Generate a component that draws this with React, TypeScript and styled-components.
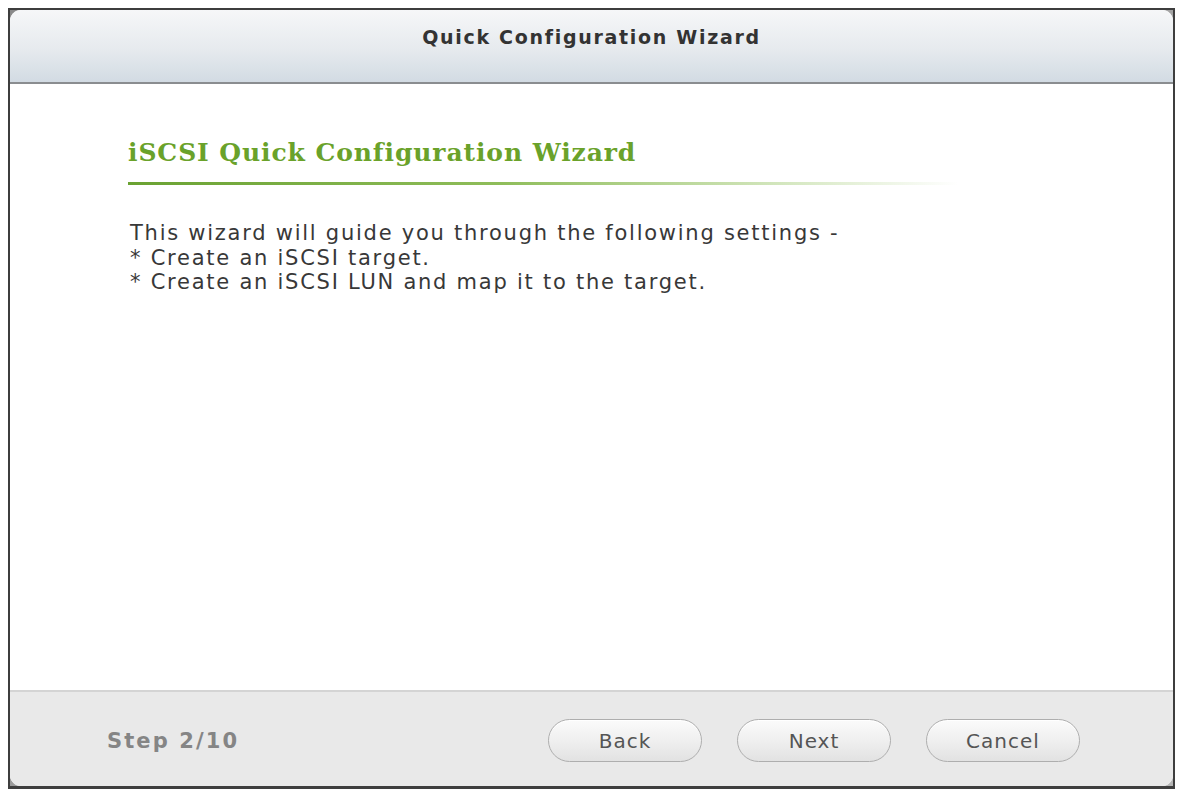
import React from "react";
import styled, { createGlobalStyle } from "styled-components";

const Global = createGlobalStyle`
  html, body { margin: 0; padding: 0; background: #ffffff; }
  body { font-family: "DejaVu Sans", Verdana, sans-serif; }
`;

const Frame = styled.div`
  box-sizing: border-box;
  margin: 8px 0 0 8px;
  width: 1167px;
  height: 781px;
  border: 2px solid #3e3e3e;
  border-bottom-width: 3px;
  background: linear-gradient(135deg, #8a8a8a, #b5b5b5);
  display: flex;
`;

const Dialog = styled.div`
  flex: 1;
  display: flex;
  flex-direction: column;
  border-radius: 11px;
  overflow: hidden;
  background: #ffffff;
`;

const TitleBar = styled.div`
  height: 74px;
  flex: none;
  display: flex;
  align-items: center;
  justify-content: center;
  background: linear-gradient(180deg, #f6f7f8 0%, #e6eaee 55%, #d2dbe3 100%);
  border-bottom: 2px solid #8a8d90;
  padding-bottom: 18px;
  box-sizing: border-box;
  font-family: "DejaVu Sans", Verdana, sans-serif;
  font-weight: bold;
  font-size: 19px;
  letter-spacing: 1.7px;
  color: #333333;
`;

const Body = styled.div`
  flex: 1;
  padding: 53px 0 0 118px;
`;

const Heading = styled.h1`
  margin: 0;
  font-family: "DejaVu Serif", Georgia, serif;
  font-weight: bold;
  font-size: 25px;
  line-height: 31px;
  letter-spacing: 0.9px;
  color: #6aa22a;
`;

const Rule = styled.div`
  margin-top: 14px;
  width: 830px;
  height: 3px;
  background: linear-gradient(90deg, #6aa232 0%, #8fbd5a 45%, #d6e8c2 80%, rgba(255,255,255,0) 100%);
`;

const Intro = styled.div`
  margin: 36px 0 0 2px;
  font-family: "DejaVu Sans", Verdana, sans-serif;
  font-size: 21px;
  line-height: 24.5px;
  letter-spacing: 1.75px;
  color: #383838;
`;

const Footer = styled.div`
  height: 96px;
  flex: none;
  box-sizing: border-box;
  border-top: 2px solid #d4d4d4;
  background: #e9e9e9;
  display: flex;
  align-items: center;
  padding: 3px 93px 0 97px;
`;

const Step = styled.div`
  font-family: "DejaVu Sans", Verdana, sans-serif;
  font-weight: bold;
  font-size: 21px;
  letter-spacing: 2.1px;
  color: #858585;
`;

const Buttons = styled.div`
  margin-left: auto;
  display: flex;
  gap: 35px;
`;

const Button = styled.button`
  width: 154px;
  height: 43px;
  border-radius: 22px;
  border: 1px solid #aeaeae;
  background: linear-gradient(180deg, #fbfbfb 0%, #eeeeee 55%, #e2e2e2 100%);
  box-shadow: inset 0 1px 0 #ffffff;
  font-family: "DejaVu Sans", Verdana, sans-serif;
  font-size: 20px;
  letter-spacing: 1px;
  color: #555555;
  padding: 0;
  cursor: pointer;
`;

export default function App() {
  return (
    <>
      <Global />
      <Frame>
        <Dialog>
          <TitleBar>Quick Configuration Wizard</TitleBar>
          <Body>
            <Heading>iSCSI Quick Configuration Wizard</Heading>
            <Rule />
            <Intro>
              This wizard will guide you through the following settings -
              <br />* Create an iSCSI target.
              <br />* Create an iSCSI LUN and map it to the target.
            </Intro>
          </Body>
          <Footer>
            <Step>Step 2/10</Step>
            <Buttons>
              <Button>Back</Button>
              <Button>Next</Button>
              <Button>Cancel</Button>
            </Buttons>
          </Footer>
        </Dialog>
      </Frame>
    </>
  );
}
